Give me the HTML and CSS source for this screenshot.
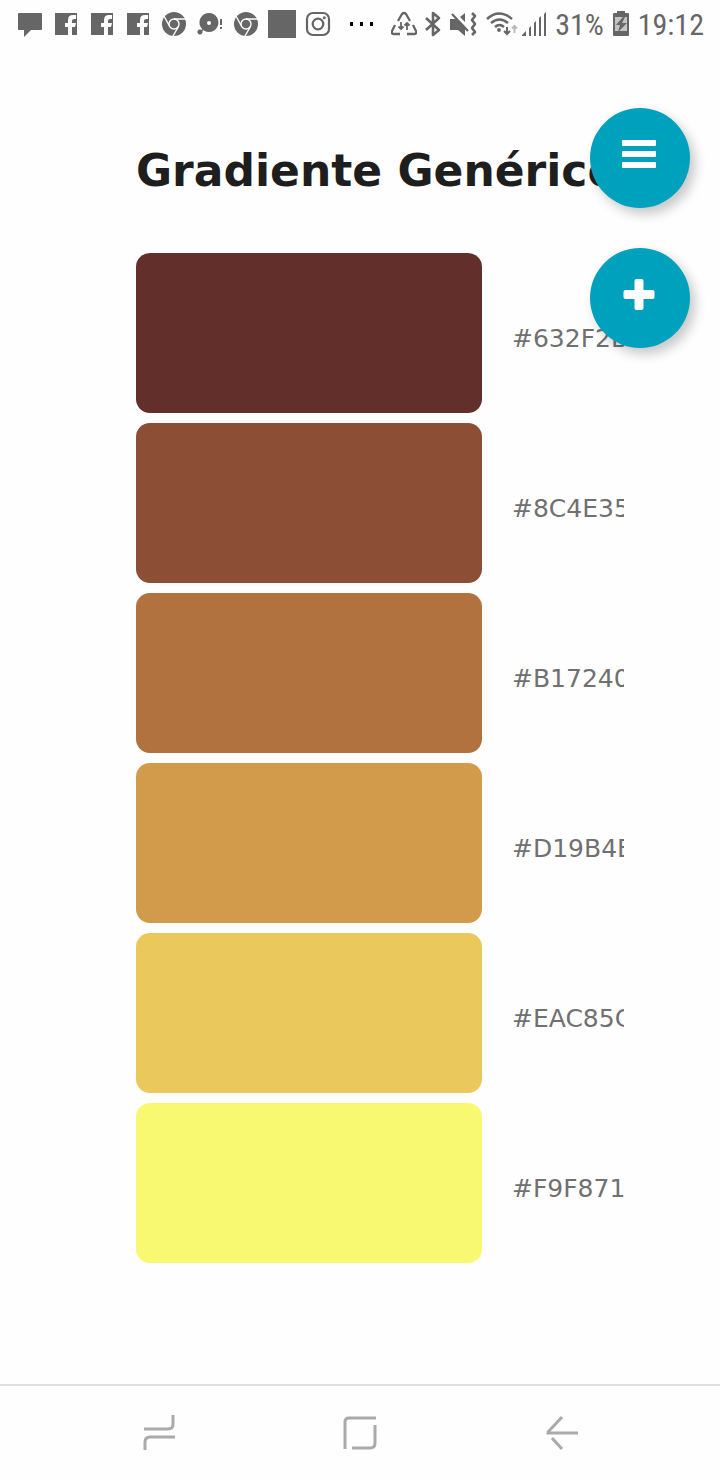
FILE: index.html
```html
<!DOCTYPE html>
<html lang="pt">
<head>
<meta charset="utf-8">
<meta name="viewport" content="width=device-width, initial-scale=1">
<title>Gradiente Genérico</title>
<link rel="stylesheet" href="styles.css">
</head>
<body>
<svg class="defs" aria-hidden="true">
  <symbol id="fb" viewBox="0 0 28 28"><path fill="currentColor" d="M3 3h22v22h-5v-8h3l1-4h-4v-2q0-2 2-2h2V5h-3q-5 0-5 5v3h-3v4h3v8H3z"/></symbol>
  <symbol id="chrome" viewBox="0 0 28 28"><circle cx="14" cy="14" r="12" fill="currentColor"/><g fill="none" stroke="#fff" stroke-width="1.4"><circle cx="14" cy="14" r="5"/><path d="M14 9h11M9.700 16.500 4 6M18.500 16.500 13 26"/></g></symbol>
</svg>
<header class="status">
  <div class="notices">
    <svg class="icon" viewBox="0 0 28 28"><path fill="currentColor" d="M3 3h22q1 0 1 1v15q0 1-1 1H15l-7 7v-7H3q-1 0-1-1V4q0-1 1-1z"/></svg>
    <svg class="icon"><use href="#fb"/></svg>
    <svg class="icon"><use href="#fb"/></svg>
    <svg class="icon"><use href="#fb"/></svg>
    <svg class="icon"><use href="#chrome"/></svg>
    <svg class="icon" viewBox="0 0 28 28"><path fill="currentColor" d="M13 3a9.500 9.500 0 1 1-.1 0zM4 19.500a2.500 2.500 0 1 1-.1 0zM24 9h2v6h-2zM24 17h2v2h-2z"/><path d="m4 22 5-4" stroke="currentColor" stroke-width="1.500"/><circle cx="13" cy="13" r="2" fill="#fff"/></svg>
    <svg class="icon"><use href="#chrome"/></svg>
    <svg class="icon" viewBox="0 0 28 28"><path fill="currentColor" d="M0 0h28v28H0z"/></svg>
    <svg class="icon" viewBox="0 0 28 28"><g fill="none" stroke="currentColor" stroke-width="2.200"><rect x="3" y="3" width="22" height="22" rx="6"/><circle cx="14" cy="14" r="5.300"/></g><circle cx="20.300" cy="7.800" r="1.500" fill="currentColor"/></svg>
    <svg class="icon dots" viewBox="0 0 34 28"><path d="M10 12h3v4h-3zM20 12h3v4h-3zM30 12h3v4h-3z"/></svg>
  </div>
  <div class="system">
    <svg class="icon s26" viewBox="0 0 26 28"><g fill="none" stroke="currentColor" stroke-width="2.300"><path d="m7 11 4-7q2-2 4 0l4 7M4 15l-3 6q-1 3 2 3h6M22 15l3 6q1 3-2 3h-7"/></g><g fill="none" stroke="currentColor" stroke-width="1.800"><path d="M10 12v7M7.500 16.500 10 19l2.500-2.500M16 20v-7M13.500 15.500 16 13l2.500 2.500"/></g></svg>
    <svg class="icon s16" viewBox="0 0 16 28"><path fill="none" stroke="currentColor" stroke-width="2.600" stroke-linejoin="round" d="m1 8 13 12-6 5V3l6 5L1 20"/></svg>
    <svg class="icon s28" viewBox="0 0 28 28"><path fill="currentColor" d="M1 9h7l8 8v9l-7-6H1zM11 7l5-4v9z"/><g fill="none" stroke="currentColor"><path stroke-width="2.200" d="m3 4 16 17"/><path stroke-width="2.600" stroke-linejoin="round" d="m23 3 3 3-3 4 3 4-3 4 3 4-3 3"/></g></svg>
    <svg class="icon s34" viewBox="0 0 34 28"><g fill="none" stroke="currentColor" stroke-width="2.500"><path d="M2 9q12-11 25 0M6 13q8.500-7 17 0M10 17q4.500-4 9 0"/></g><circle cx="14" cy="20" r="1.900" fill="currentColor"/><path fill="none" stroke="currentColor" stroke-width="2" d="M22 17v7M19 21l3 3 3-3"/><path fill="none" stroke="#bbb" stroke-width="2" d="M29.500 23v-7M27 18.500l2.500-2.500 2.500 2.500"/></svg>
    <svg class="icon s26" viewBox="0 0 26 28"><path fill="currentColor" d="M1 26v-1l4-4v5zM8 18l2-2v10H8zM13 13l2-2v15h-2zM18 8l2-2v20h-2zM23 4l2-2v24h-2z"/></svg>
    <span class="charge">31%</span>
    <svg class="icon s18" viewBox="0 0 18 28"><path fill="currentColor" d="M5 1h8v2h3q1 0 1 1v21q0 1-1 1H2q-1 0-1-1V4q0-1 1-1h3z"/><path fill="#c4c4c4" d="M3 7h12v14H3z"/><path fill="#666" d="m11 7-7 8h4l-2 7 9-9h-5l3-6z"/></svg>
    <time>19:12</time>
  </div>
</header>

<main class="palette">
  <h1>Gradiente Genérico</h1>
  <ul class="colors">
    <li><span class="swatch c1"></span><span class="code">#632F2B</span></li>
    <li><span class="swatch c2"></span><span class="code">#8C4E35</span></li>
    <li><span class="swatch c3"></span><span class="code">#B17240</span></li>
    <li><span class="swatch c4"></span><span class="code">#D19B4B</span></li>
    <li><span class="swatch c5"></span><span class="code">#EAC85C</span></li>
    <li><span class="swatch c6"></span><span class="code">#F9F871</span></li>
  </ul>
</main>

<div class="actions">
  <button type="button" aria-label="Menu"><svg viewBox="0 0 100 100"><g fill="#fff"><rect x="32" y="32" width="34" height="6" rx="1"/><rect x="32" y="43" width="34" height="6" rx="1"/><rect x="32" y="54" width="34" height="6" rx="1"/></g></svg></button>
  <button type="button" aria-label="Adicionar"><svg viewBox="0 0 100 100"><g fill="#fff"><rect x="44.500" y="31" width="9" height="31" rx="2"/><rect x="33.500" y="42" width="31" height="9" rx="2"/></g></svg></button>
</div>

<nav class="navbar">
  <button type="button" aria-label="Recentes"><svg viewBox="0 0 40 40"><path d="M5 16h24q5 0 5-5V2M36 24H11q-5 0-5 5v8"/></svg></button>
  <button type="button" aria-label="Início"><svg viewBox="0 0 40 40"><path d="M5 36V9q0-4 4-4h27M35 12v18q0 5-5 5H12"/></svg></button>
  <button type="button" aria-label="Voltar"><svg viewBox="0 0 40 40"><path d="M21 4 7 19v1h30M11 25l10 11"/></svg></button>
</nav>
</body>
</html>
```
FILE: styles.css
```css
* { box-sizing: border-box; }
body {
  margin: 0;
  min-height: 100vh;
  display: flex;
  flex-direction: column;
  background: #fefefe;
  color: #666;
  font-family: "DejaVu Sans", sans-serif;
}
button { border: 0; padding: 0; background: none; cursor: pointer; }
.defs { display: none; }

.status {
  height: 48px;
  padding: 0 16px;
  display: flex;
  align-items: center;
  justify-content: space-between;
  font: 30px "Roboto Condensed", Roboto, sans-serif;
}
.notices { display: flex; gap: 8px; }
.system { display: flex; align-items: center; gap: 8px; }
.icon { flex: none; width: 28px; height: 28px; display: block; }
.dots { width: 34px; color: #000; }
.s16 { width: 16px; }
.s18 { width: 18px; }
.s26 { width: 26px; }
.s34 { width: 34px; }
.s34 + .s26 { margin-left: -6px; }

.palette { flex: 1; padding: 96px 96px 0 136px; }
h1 {
  margin: 0;
  height: 109px;
  font-size: 44px;
  line-height: 54px;
  font-weight: 700;
  white-space: nowrap;
  color: #1e1e1e;
}
.colors {
  margin: 0;
  padding: 0;
  list-style: none;
  display: grid;
  gap: 10px;
}
.colors li {
  display: grid;
  grid-template-columns: 1fr 112px;
  gap: 30px;
  height: 160px;
  align-items: center;
}
.swatch { height: 100%; border-radius: 14px; }
.code {
  padding-top: 12px;
  overflow: hidden;
  font-size: 25px;
  line-height: 32px;
  color: #707070;
}
.c1 { background: #632f2b; }
.c2 { background: #8c4e35; }
.c3 { background: #b17240; }
.c4 { background: #d19b4b; }
.c5 { background: #eac85c; }
.c6 { background: #f9f871; }

.actions {
  position: fixed;
  top: 108px;
  right: 30px;
  display: grid;
  gap: 40px;
}
.actions button {
  width: 100px;
  height: 100px;
  border-radius: 50%;
  background: #00a1bd;
  box-shadow: 5px 6px 12px rgba(0, 0, 0, .22);
}
.actions svg { display: block; width: 100%; }

.navbar {
  height: 96px;
  padding: 0 58px;
  border-top: 2px solid #e0e0e0;
  display: grid;
  grid-template-columns: repeat(3, 1fr);
  place-items: center;
}
.navbar svg {
  display: block;
  width: 40px;
  fill: none;
  stroke: #aaa;
  stroke-width: 3;
}
```
